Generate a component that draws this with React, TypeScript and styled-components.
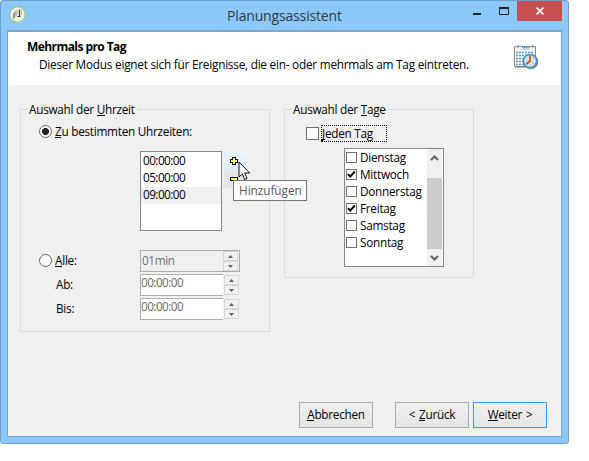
import React from "react";
import styled, { createGlobalStyle, css } from "styled-components";

const GlobalStyle = createGlobalStyle`
  * { box-sizing: border-box; }
  body { margin: 0; background: #fff; font: 11.8px/17px "Open Sans", sans-serif; letter-spacing: -0.28px; color: #000; overflow: hidden; cursor: default; }
  u { text-decoration: none; display: inline-block; line-height: 12px; border-bottom: 1px solid currentColor; }
`;

const Window = styled.div`
  width: 569px; height: 444px; display: flex; flex-direction: column;
  background: #8cc8fa; border: 1px solid #6f9fc8; border-radius: 3px;
  padding: 0 6px 6px; position: relative;
`;
const TitleBar = styled.header`
  height: 29px; flex: none; display: flex; align-items: flex-start;
`;
const AppMark = styled.svg`width: 17px; height: 17px; margin: 5px 0 0 2px; flex: none;`;
const Title = styled.h1`
  margin: 0 0 0 201px; padding-top: 4px; width: 240px; font-size: 14px; line-height: 22px; font-weight: 400; color: #2b3a47; white-space: nowrap; letter-spacing: -0.16px;
`;
const WindowControls = styled.svg`width: 50px; height: 20px; flex: none;`;
const CloseButton = styled.button`
  width: 45px; height: 20px; padding: 0; border: 0; background: #c75050; display: flex; align-items: center; justify-content: center; flex: none;
`;
const Client = styled.main`
  flex: 1; min-height: 0; display: flex; flex-direction: column;
  border: 1px solid #7ba6cc; border-top: 2px solid #83a5c5; background: #f0f0f0;
`;
const Banner = styled.section`
  height: 53px; flex: none; display: flex; justify-content: space-between; background: #fff; padding: 5px 21px 0 19px; border-right: 1px solid #f0f0f0;
`;
const Heading = styled.h2`margin: 0; padding-top: 1px; font-size: 12px; line-height: 17px; font-weight: 700; letter-spacing: -0.57px;`;
const Description = styled.p`margin: 0 0 0 12px; line-height: 18px; white-space: nowrap; letter-spacing: -0.24px;`;
const CalendarIcon = styled.svg`width: 25px; height: 25px; margin-top: 8px;`;
const Panels = styled.section`display: flex; gap: 14px; align-items: flex-start; padding: 24px 0 0 12px; height: 317px; flex: none;`;
const Group = styled.div<{ $w: number; $h: number }>`
  width: ${p => p.$w}px; height: ${p => p.$h}px; border: 1px solid #dcdcdc; display: flex; flex-direction: column; align-items: flex-start; flex: none;
`;
const Legend = styled.div`
  margin: -9px 0 0 6px; padding: 0 2px; height: 17px; background: #f0f0f0; white-space: nowrap;
`;
const Option = styled.label<{ $top: number; $left: number }>`
  display: flex; align-items: center; height: 17px; margin: ${p => p.$top}px 0 0 ${p => p.$left}px; white-space: nowrap; flex: none;
`;
const Radio = styled.span<{ $on?: boolean }>`
  width: 13px; height: 13px; border-radius: 50%; border: 1px solid #686868; background: #fff; margin-right: 3px; flex: none;
  ${p => p.$on && css`background: radial-gradient(circle, #222 0 3.2px, #fff 3.8px);`}
`;
const Box = styled.span<{ $size: number }>`
  width: ${p => p.$size}px; height: ${p => p.$size}px; border: 1px solid #707070; background: #fff; display: flex; flex: none;
`;
const FocusLabel = styled.span`
  width: 66px; height: 17px; line-height: 15px; margin-left: 2px; border: 1px dotted #000; white-space: nowrap;
`;
const TimeRow = styled.div`display: flex; gap: 2px; margin: 11px 0 0 119px; height: 80px; flex: none;`;
const TimeList = styled.div`width: 82px; border: 1px solid #828790; background: #fff; padding-top: 1px;`;
const TimeItem = styled.div<{ $selected?: boolean }>`
  height: 17px; padding-left: 2px; line-height: 15px; letter-spacing: -0.56px; background: ${p => p.$selected ? "#f0f0f0" : "#fff"};
`;
const Tools = styled.div`width: 20px; display: flex; flex-direction: column;`;
const ToolButton = styled.button<{ $hover?: boolean }>`
  width: 20px; height: ${p => p.$hover ? 18 : 19}px; padding: ${p => p.$hover ? "2px" : "1px"} 0 0; border: 0; display: flex; align-items: center; justify-content: center;
  background: ${p => p.$hover ? "linear-gradient(#ebf4fc,#dcecfc)" : "#e6e6e6"};
`;
const FieldRow = styled.div<{ $top: number }>`
  display: flex; height: 22px; margin: ${p => p.$top}px 0 0 18px; flex: none;
`;
const FieldLabel = styled.label<{ $indent?: boolean }>`
  width: 101px; display: flex; align-items: center; height: 22px; padding: 0 0 1px ${p => p.$indent ? 17 : 0}px; white-space: nowrap;
`;
const Field = styled.div<{ $disabled?: boolean }>`
  width: ${p => p.$disabled ? 100 : 83}px; height: 22px; display: flex; justify-content: space-between;
  color: #6d6d6d; border: 1px solid #abadb3; line-height: 15px; letter-spacing: -0.56px;
  ${p => p.$disabled ? css`padding: 0 1px; line-height: 18px; letter-spacing: -0.4px;` : css`background: #fff; border-right: 0;`}
`;
const Stepper = styled.div<{ $outside?: boolean }>`
  width: 15px; height: 20px; margin: ${p => p.$outside ? "1px 0 0 1px" : "0"}; display: flex; flex-direction: column;
`;
const StepButton = styled.button`
  width: 15px; height: 10px; padding: 0; border: 1px solid #d5d5d5; background: #f0f0f0; display: flex; align-items: center; justify-content: center;
`;
const DayList = styled.div`
  width: 100px; height: 119px; margin: 6px 0 0 59px; border: 1px solid #828790; background: #fff; display: flex; justify-content: space-between; flex: none;
`;
const Days = styled.div`padding-left: 1px;`;
const Day = styled.label`display: flex; align-items: center; gap: 3px; height: 17px; white-space: nowrap;`;
const Scrollbar = styled.div`width: 15px; margin-right: 1px; background: #f0f0f0; display: flex; flex-direction: column; justify-content: space-between; height: 117px;`;
const Arrow = styled.svg`width: 15px; height: 17px;`;
const Thumb = styled.div`height: 71px; background: #cdcdcd; margin-top: 12px;`;
const Footer = styled.footer`display: flex; height: 26px; margin-left: 291px;`;
const Button = styled.button<{ $primary?: boolean; $gap?: number }>`
  width: 74px; height: 26px; padding: 0 0 1px; margin-right: ${p => p.$gap ?? 0}px; font: inherit; letter-spacing: -0.28px; word-spacing: 1px; color: #000; white-space: nowrap;
  border: 1px solid ${p => p.$primary ? "#3399ff" : "#acacac"}; background: linear-gradient(#f0f0f0, #e5e5e5);
`;
const Tooltip = styled.div`
  position: absolute; left: 232px; top: 179px; width: 74px; height: 21px; padding-left: 5px; line-height: 19px;
  border: 1px solid #767676; background: #fff; color: #575757; white-space: nowrap; letter-spacing: -0.05px;
`;
const Pointer = styled.svg`position: absolute; left: 237px; top: 160px; width: 13px; height: 19px;`;

const Check = () => (
  <svg width="9" height="9" viewBox="0 0 9 9"><path d="M1 4.2 3.3 6.6 7.8 1.5" fill="none" stroke="#000" strokeWidth="2" /></svg>
);
const Steps = ({ outside }: { outside?: boolean }) => (
  <Stepper $outside={outside}>
    <StepButton><svg width="5" height="3"><path d="M0 3 2.5 0 5 3Z" fill="#606060" /></svg></StepButton>
    <StepButton><svg width="5" height="3"><path d="M0 0 2.5 3 5 0Z" fill="#606060" /></svg></StepButton>
  </Stepper>
);

const times = ["00:00:00", "05:00:00", "09:00:00"];
const days: [string, boolean][] = [["Dienstag", false], ["Mittwoch", true], ["Donnerstag", false], ["Freitag", true], ["Samstag", false], ["Sonntag", false]];

export default function App() {
  return (
    <>
      <GlobalStyle />
      <Window>
        <TitleBar>
          <AppMark viewBox="0 0 17 17">
            <circle cx="8.5" cy="8.5" r="7.7" fill="#f3f3ee" stroke="#9cc755" />
            <path d="M4 7.5 6 6v6l-2 1Z" fill="#8d8d8b" /><path d="M5.5 5 8.5 4v3l-1.5 5Z" fill="#b5b5b0" />
            <path d="M10.5 3.5v7M8.5 10.5h3" stroke="#333" strokeWidth="1.2" /><path d="M12.5 4v5" stroke="#bbb" />
          </AppMark>
          <Title>Planungsassistent</Title>
          <WindowControls viewBox="0 0 50 20" shapeRendering="crispEdges">
            <path d="M6 12h8v2H6Z" fill="#222" />
            <path d="M32 6h10v8H32ZM33 8v5h8V8Z" fill="#222" fillRule="evenodd" />
          </WindowControls>
          <CloseButton aria-label="Schließen">
            <svg width="8" height="8" viewBox="0 0 8 8"><path d="m.6.6 6.8 6.8M7.4.6.6 7.4" stroke="#fff" strokeWidth="1.6" /></svg>
          </CloseButton>
        </TitleBar>
        <Client>
          <Banner>
            <div>
              <Heading>Mehrmals pro Tag</Heading>
              <Description>Dieser Modus eignet sich für Ereignisse, die ein- oder mehrmals am Tag eintreten.</Description>
            </div>
            <CalendarIcon viewBox="0 0 25 25">
              <path d="M.5 1.5h21v20H.5Z" fill="#f7fafc" stroke="#888" />
              <path d="M1 22h20" stroke="#777" />
              <path d="M4 0v3M19 0v3" stroke="#888" />
              <path d="M8 2.5h8M9 4h6" stroke="#4a94c9" strokeDasharray="1.5 .6" />
              <path d="M2 7.5h17M2 10.5h17M2 13.5h14M2 16.5h10M2 19.5h10" stroke="#4c9ad0" strokeWidth="1.6" strokeDasharray="2 1" />
              <circle cx="16.8" cy="16.8" r="7.5" fill="#7f8b94" />
              <circle cx="16" cy="16" r="6.6" fill="#dde2e6" stroke="#3990c7" strokeWidth="1.5" />
              <path d="M16 10.5V16l-3.7 3.3" fill="none" stroke="#c9581f" strokeWidth="1.9" />
              <path d="M19 13h1M19 18h1M16 21h1" stroke="#8d989f" />
            </CalendarIcon>
          </Banner>
          <Panels>
            <Group $w={250} $h={223}>
              <Legend>Auswahl der <u>U</u>hrzeit</Legend>
              <Option $top={5} $left={18}><Radio $on /><span><u>Z</u>u bestimmten Uhrzeiten:</span></Option>
              <TimeRow>
                <TimeList>{times.map((t, i) => <TimeItem key={t} $selected={i === 2}>{t}</TimeItem>)}</TimeList>
                <Tools>
                  <ToolButton $hover aria-label="Hinzufügen">
                    <svg width="8" height="8" viewBox="0 0 8 8" shapeRendering="crispEdges"><path d="M2 0h4v2h2v4H6v2H2V6H0V2h2Z" fill="#000" /><path d="M3 1h2v2h2v2H5v2H3V5H1V3h2Z" fill="#ffff70" /></svg>
                  </ToolButton>
                  <ToolButton aria-label="Entfernen">
                    <svg width="8" height="4" viewBox="0 0 8 4" shapeRendering="crispEdges"><path d="M0 0h8v4H0Z" /><path d="M1 1h6v2H1Z" fill="#ffff70" /></svg>
                  </ToolButton>
                </Tools>
              </TimeRow>
              <FieldRow $top={19}>
                <FieldLabel><Radio /><span><u>A</u>lle:</span></FieldLabel>
                <Field $disabled><span>01min</span><Steps /></Field>
              </FieldRow>
              <FieldRow $top={2}><FieldLabel $indent>Ab:</FieldLabel><Field>00:00:00</Field><Steps outside /></FieldRow>
              <FieldRow $top={2}><FieldLabel $indent>Bis:</FieldLabel><Field>00:00:00</Field><Steps outside /></FieldRow>
            </Group>
            <Group $w={190} $h={169}>
              <Legend>Auswahl der <u>T</u>age</Legend>
              <Option $top={7} $left={21}><Box $size={13} /><FocusLabel><u>J</u>eden Tag</FocusLabel></Option>
              <DayList>
                <Days>{days.map(([d, on]) => <Day key={d}><Box $size={11}>{on && <Check />}</Box>{d}</Day>)}</Days>
                <Scrollbar>
                  <Arrow viewBox="0 0 15 17"><path d="m4 11 3.5-3.5L11 11" fill="none" stroke="#606060" strokeWidth="2" /></Arrow>
                  <Thumb />
                  <Arrow viewBox="0 0 15 17"><path d="m4 7 3.5 3.5L11 7" fill="none" stroke="#606060" strokeWidth="2" /></Arrow>
                </Scrollbar>
              </DayList>
            </Group>
          </Panels>
          <Footer>
            <Button $gap={22}><u>A</u>bbrechen</Button>
            <Button $gap={4}>&lt; <u>Z</u>urück</Button>
            <Button $primary><u>W</u>eiter &gt;</Button>
          </Footer>
        </Client>
        <Tooltip role="tooltip">Hinzufügen</Tooltip>
        <Pointer viewBox="0 0 13 19"><path d="M1 1v15l3.500-3.200L6.500 18.500 9 17.500 6.700 12H11.800Z" fill="#fff" stroke="#111" /></Pointer>
      </Window>
    </>
  );
}
